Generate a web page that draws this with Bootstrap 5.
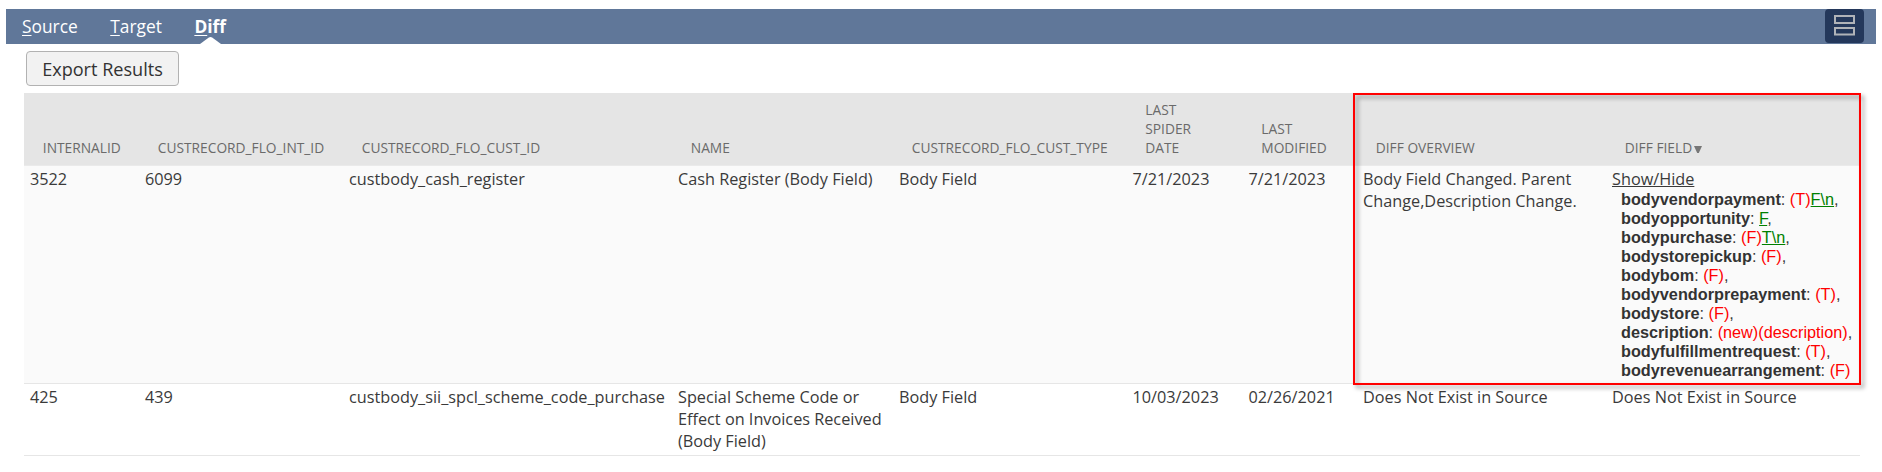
<!DOCTYPE html>
<html lang="en">
<head>
<meta charset="utf-8">
<title>Diff</title>
<link href="https://cdn.jsdelivr.net/npm/bootstrap@5.3.0/dist/css/bootstrap.min.css" rel="stylesheet">
<style>
body{font-family:"Open Sans",sans-serif;font-size:16.25px;line-height:22px;color:#333;background:#fff;overflow:hidden}
.topbar{margin:9px 6px 0;height:35px;background:#607799;padding:0 12px 0 16px}
.topbar .nav{gap:32.5px}
.topbar .nav-link{padding:6px 0 0;color:#fff;font-size:17.35px;line-height:22px;height:35px;position:relative}
.topbar .nav-link.active{font-weight:700}
.topbar u{text-underline-offset:2px;text-decoration-thickness:1px}
.caret-up{position:absolute;left:6px;bottom:0}
.layout-btn{width:39px;height:34px;border-radius:4px;background:#24385b;padding:0;border:0}
.export-btn{margin:7px 0 0 26px;width:153px;height:35px;border:1px solid #b2b2b2;border-radius:4px;background:#f2f2f2;color:#333;font-size:18.1px;font-weight:500;line-height:24px;padding:5px 0 4px}
.results{margin:7px 0 0 24px;width:1836px}
.results table{table-layout:fixed;width:1836px;color:#3a3a3a;border-collapse:separate;border-spacing:0}
.results th{background:#e5e5e5;height:73px;padding:0 0 8px 18.8px;vertical-align:bottom;font-size:13.75px;line-height:19px;font-weight:400;color:#6a6a6a;border-bottom:1px solid #eaeaea}
.results td{padding:2px 0 3px 6px;vertical-align:top;border-bottom:1px solid #e6e6e6}
.changed td{background:#fafafa;height:218px}
.unmatched td{height:72px}
.sort-mark{margin-left:2px}
.diff-list{font-family:"Liberation Sans",Arial,sans-serif;line-height:19px;padding-left:9px;white-space:nowrap}
.diff-list b{color:#333}
.diff-list del{color:#f00;text-decoration:none}
.diff-list ins{color:green}
.callout-box{position:absolute;left:1329px;top:0;width:508px;height:292px;border:2px solid #f00;filter:drop-shadow(3px 3px 2px rgba(0,0,0,.4));pointer-events:none}
</style>
</head>
<body>
<nav class="topbar d-flex justify-content-between align-items-start">
  <div class="nav flex-nowrap">
    <a class="nav-link" href="#"><u>S</u>ource</a>
    <a class="nav-link" href="#"><u>T</u>arget</a>
    <a class="nav-link active" href="#"><u>D</u>iff<svg class="caret-up" width="21" height="7" viewBox="0 0 21 7"><path d="M0 7 8.500.8Q10.500-.6 12.500.8L21 7Z" fill="#fff"/></svg></a>
  </div>
  <button class="layout-btn d-flex justify-content-center" type="button" aria-label="Layout">
    <svg class="flex-shrink-0" width="23" height="34" viewBox="0 0 23 34" fill="none" stroke="#b0b3b8" stroke-width="2"><path d="M2 7H21V14H2ZM2 19H21V25.500H2Z"/></svg>
  </button>
</nav>
<button class="btn export-btn d-block" type="button">Export Results</button>
<div class="results position-relative">
  <table>
    <colgroup><col style="width:115px"><col style="width:204px"><col style="width:329px"><col style="width:221px"><col style="width:233.5px"><col style="width:116px"><col style="width:114.500px"><col style="width:249px"><col style="width:254px"></colgroup>
    <thead><tr>
      <th>INTERNALID</th><th>CUSTRECORD_FLO_INT_ID</th><th>CUSTRECORD_FLO_CUST_ID</th><th>NAME</th><th>CUSTRECORD_FLO_CUST_TYPE</th><th>LAST<br>SPIDER<br>DATE</th><th>LAST<br>MODIFIED</th><th>DIFF OVERVIEW</th>
      <th>DIFF FIELD<svg class="sort-mark" width="8" height="7" viewBox="0 0 8 7"><path d="M0 0H8L4.800 7H3.200Z" fill="#777"/></svg></th>
    </tr></thead>
    <tbody>
      <tr class="changed">
        <td>3522</td><td>6099</td><td>custbody_cash_register</td><td>Cash Register (Body Field)</td><td>Body Field</td><td>7/21/2023</td><td>7/21/2023</td><td>Body Field Changed. Parent<br>Change,Description Change.</td>
        <td><u>Show/Hide</u>
          <div class="diff-list">
            <div><b>bodyvendorpayment</b>: <del>(T)</del><ins>F\n</ins>,</div>
            <div><b>bodyopportunity</b>: <ins>F</ins>,</div>
            <div><b>bodypurchase</b>: <del>(F)</del><ins>T\n</ins>,</div>
            <div><b>bodystorepickup</b>: <del>(F)</del>,</div>
            <div><b>bodybom</b>: <del>(F)</del>,</div>
            <div><b>bodyvendorprepayment</b>: <del>(T)</del>,</div>
            <div><b>bodystore</b>: <del>(F)</del>,</div>
            <div><b>description</b>: <del>(new)(description)</del>,</div>
            <div><b>bodyfulfillmentrequest</b>: <del>(T)</del>,</div>
            <div><b>bodyrevenuearrangement</b>: <del>(F)</del></div>
          </div>
        </td>
      </tr>
      <tr class="unmatched">
        <td>425</td><td>439</td><td>custbody_sii_spcl_scheme_code_purchase</td><td>Special Scheme Code or<br>Effect on Invoices Received<br>(Body Field)</td><td>Body Field</td><td>10/03/2023</td><td>02/26/2021</td><td>Does Not Exist in Source</td><td>Does Not Exist in Source</td>
      </tr>
    </tbody>
  </table>
  <div class="callout-box"></div>
</div>
<script src="https://cdn.jsdelivr.net/npm/bootstrap@5.3.0/dist/js/bootstrap.bundle.min.js"></script>
</body>
</html>
